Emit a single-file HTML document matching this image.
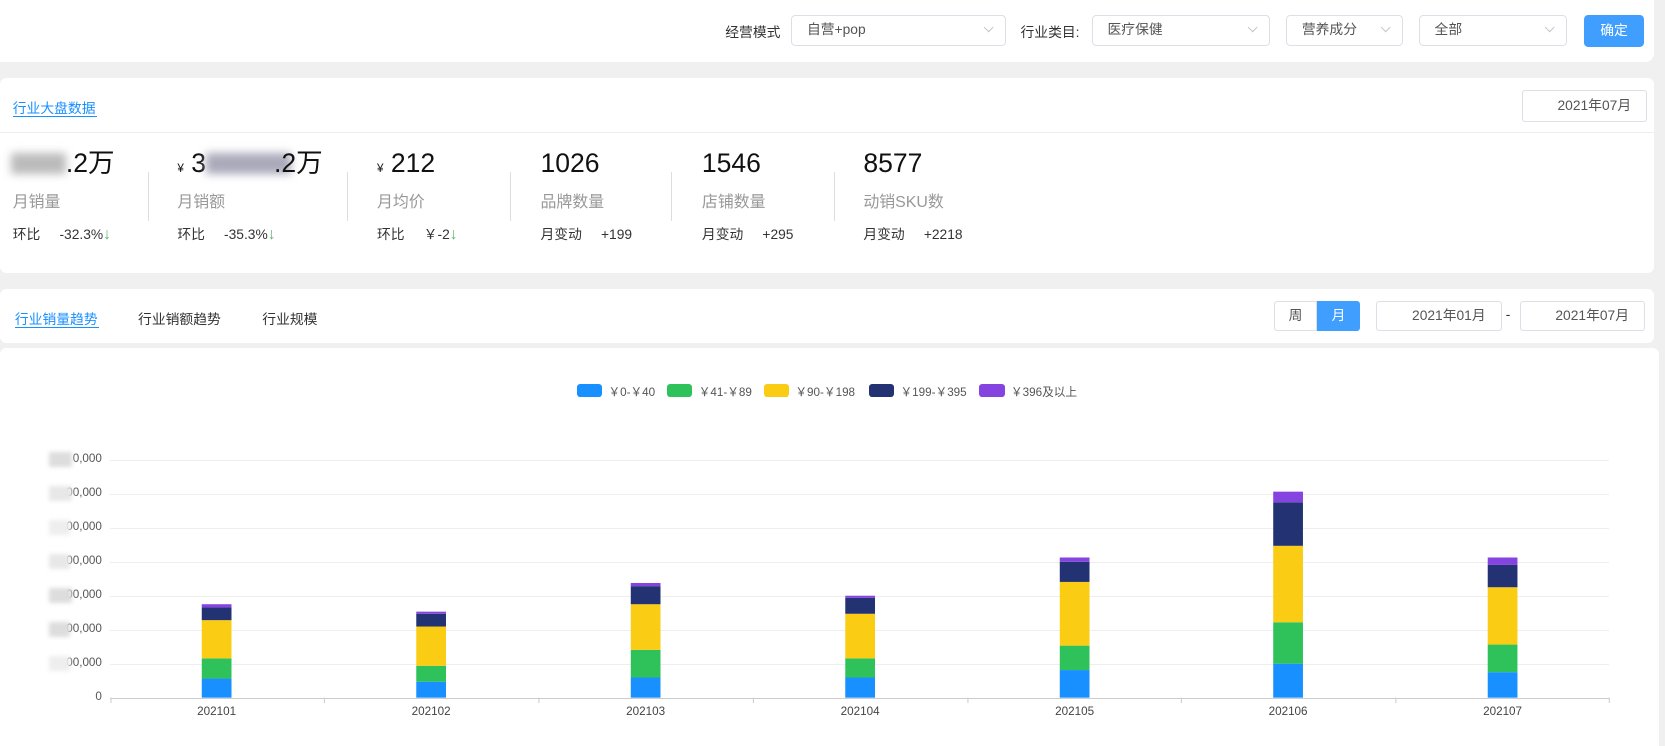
<!DOCTYPE html>
<html><head><meta charset="utf-8"><style>
html,body{margin:0;padding:0;background:#f0f0f0;overflow:hidden;width:1665px;height:746px}
#w{zoom:1.0619;position:relative;width:1568px;height:703px;font-family:"Liberation Sans","Noto Sans CJK SC",sans-serif;color:#333}
.a{position:absolute}
.card{position:absolute;background:#fff;border-radius:6px}
.sel{position:absolute;border:1px solid #dcdfe6;border-radius:4px;background:#fff;height:29px;box-sizing:border-box;font-size:13px;color:#555;line-height:27px;padding-left:14px}
.sel:after{content:"";position:absolute;right:12px;top:8px;width:6px;height:6px;border-right:1px solid #c0c4cc;border-bottom:1px solid #c0c4cc;transform:rotate(45deg)}
.box{position:absolute;border:1px solid #dcdfe6;border-radius:3px;box-sizing:border-box;font-size:13px;color:#555;text-align:right;padding-right:14px}
.big{position:absolute;font-size:25px;color:#111;top:139px;line-height:30px;white-space:nowrap}
.lbl{position:absolute;font-size:15px;color:#999;top:178px}
.sub{position:absolute;font-size:13px;color:#333;top:210px}
.sub b{font-weight:normal;margin-left:18px}
.dn{color:#5ab56e;font-size:15px}
.vd{position:absolute;top:162px;width:1px;height:46px;background:#ddd}
.grid{position:absolute;left:104px;width:1411px;height:1px;background:#eee}
.yl{position:absolute;left:40px;width:56px;text-align:right;font-size:11px;color:#555}
.blur{position:absolute;background:#ddd;filter:blur(2px)}
.leg{position:absolute;top:362px;width:24px;height:12px;border-radius:3px}
.lt{position:absolute;top:361px;font-size:11px;color:#555}
.xl{position:absolute;top:664px;font-size:11px;color:#444;width:60px;text-align:center}
.bl{position:absolute;filter:blur(4px);height:20px}
</style></head><body><div id="w">
<div class="card" style="left:0;top:0;width:1558px;height:58px;border-radius:0 0 8px 0"></div>
<div class="a" style="left:683px;top:20px;font-size:13px;color:#333">经营模式</div>
<div class="sel" style="left:745px;top:14px;width:202px">自营+pop</div>
<div class="a" style="left:961px;top:20px;font-size:13px;color:#333">行业类目:</div>
<div class="sel" style="left:1028px;top:14px;width:168px">医疗保健</div>
<div class="sel" style="left:1211px;top:14px;width:110px">营养成分</div>
<div class="sel" style="left:1336px;top:14px;width:140px">全部</div>
<div class="a" style="left:1492px;top:14px;width:56px;height:30px;background:#409eff;border-radius:4px;color:#fff;font-size:13px;text-align:center;line-height:30px">确定</div>

<div class="card" style="left:0;top:73px;width:1558px;height:184px"></div>
<div class="a" style="left:12px;top:91px;font-size:13px;color:#1890ff">行业大盘数据</div>
<div class="a" style="left:12px;top:109px;width:79px;height:1px;background:#1890ff"></div>
<div class="box" style="left:1433px;top:85px;width:118px;height:30px;line-height:28px">2021年07月</div>
<div class="a" style="left:0;top:124px;width:1558px;height:1px;background:#eee"></div>

<div class="bl" style="left:10px;top:144px;width:52px;background:#bbb"></div>
<div class="big" style="left:62px">.2万</div>
<div class="lbl" style="left:12px">月销量</div>
<div class="sub" style="left:12px">环比<b>-32.3%<span class="dn">↓</span></b></div>
<div class="vd" style="left:139px"></div>
<div class="big" style="left:167px"><span style="font-size:11px">¥</span> 3</div>
<div class="bl" style="left:194px;top:144px;width:80px;background:#aab"></div>
<div class="big" style="left:258px">.2万</div>
<div class="lbl" style="left:167px">月销额</div>
<div class="sub" style="left:167px">环比<b>-35.3%<span class="dn">↓</span></b></div>
<div class="vd" style="left:327px"></div>
<div class="big" style="left:355px"><span style="font-size:11px">¥</span> 212</div>
<div class="lbl" style="left:355px">月均价</div>
<div class="sub" style="left:355px">环比<b>￥-2<span class="dn">↓</span></b></div>
<div class="vd" style="left:480px"></div>
<div class="big" style="left:509px">1026</div>
<div class="lbl" style="left:509px">品牌数量</div>
<div class="sub" style="left:509px">月变动<b>+199</b></div>
<div class="vd" style="left:632px"></div>
<div class="big" style="left:661px">1546</div>
<div class="lbl" style="left:661px">店铺数量</div>
<div class="sub" style="left:661px">月变动<b>+295</b></div>
<div class="vd" style="left:785px"></div>
<div class="big" style="left:813px">8577</div>
<div class="lbl" style="left:813px">动销SKU数</div>
<div class="sub" style="left:813px">月变动<b>+2218</b></div>

<div class="card" style="left:0;top:272px;width:1558px;height:51px"></div>
<div class="a" style="left:14px;top:290px;font-size:13px;color:#1890ff">行业销量趋势</div>
<div class="a" style="left:14px;top:308px;width:79px;height:1px;background:#1890ff"></div>
<div class="a" style="left:130px;top:290px;font-size:13px;color:#333">行业销额趋势</div>
<div class="a" style="left:247px;top:290px;font-size:13px;color:#333">行业规模</div>
<div class="a" style="left:1200px;top:283px;width:40px;height:29px;border:1px solid #dcdfe6;border-radius:3px 0 0 3px;box-sizing:border-box;font-size:13px;text-align:center;line-height:27px;color:#555">周</div>
<div class="a" style="left:1240px;top:283px;width:41px;height:29px;background:#409eff;border-radius:0 3px 3px 0;font-size:13px;text-align:center;line-height:29px;color:#fff">月</div>
<div class="box" style="left:1296px;top:283px;width:118px;height:29px;line-height:27px">2021年01月</div>
<div class="a" style="left:1418px;top:289px;font-size:13px">-</div>
<div class="box" style="left:1431px;top:283px;width:118px;height:29px;line-height:27px">2021年07月</div>

<div class="card" style="left:0;top:328px;width:1562px;height:390px"></div>
<div class="leg" style="left:543px;background:#1890ff"></div><div class="lt" style="left:573px">￥0-￥40</div>
<div class="leg" style="left:628px;background:#2fc25b"></div><div class="lt" style="left:658px">￥41-￥89</div>
<div class="leg" style="left:719px;background:#facc14"></div><div class="lt" style="left:749px">￥90-￥198</div>
<div class="leg" style="left:818px;background:#223273"></div><div class="lt" style="left:848px">￥199-￥395</div>
<div class="leg" style="left:922px;background:#8543e0"></div><div class="lt" style="left:952px">￥396及以上</div>

<div class="grid" style="top:433px"></div><div class="grid" style="top:465px"></div><div class="grid" style="top:497px"></div><div class="grid" style="top:529px"></div><div class="grid" style="top:561px"></div><div class="grid" style="top:593px"></div><div class="grid" style="top:625px"></div>
<div class="grid" style="top:657px;background:#ccc"></div>
<div class="yl" style="top:426px">0,000</div><div class="yl" style="top:458px">00,000</div><div class="yl" style="top:490px">00,000</div><div class="yl" style="top:522px">00,000</div><div class="yl" style="top:554px">00,000</div><div class="yl" style="top:586px">00,000</div><div class="yl" style="top:618px">00,000</div><div class="yl" style="top:650px">0</div>
<div class="blur" style="left:46px;top:426px;width:22px;height:14px"></div><div class="blur" style="left:46px;top:458px;width:22px;height:14px;background:#e8e8e8"></div><div class="blur" style="left:46px;top:490px;width:20px;height:14px;background:#eee"></div><div class="blur" style="left:46px;top:522px;width:20px;height:14px;background:#e8e8e8"></div><div class="blur" style="left:46px;top:554px;width:22px;height:14px"></div><div class="blur" style="left:46px;top:586px;width:20px;height:14px"></div><div class="blur" style="left:46px;top:618px;width:20px;height:14px;background:#eee"></div>

<svg class="a" style="left:0;top:0" width="1568" height="703">
<g stroke="#ccc"><line x1="104.5" y1="657" x2="104.5" y2="662"/><line x1="305.5" y1="657" x2="305.5" y2="662"/><line x1="507.5" y1="657" x2="507.5" y2="662"/><line x1="709.5" y1="657" x2="709.5" y2="662"/><line x1="911.5" y1="657" x2="911.5" y2="662"/><line x1="1112.5" y1="657" x2="1112.5" y2="662"/><line x1="1314.5" y1="657" x2="1314.5" y2="662"/><line x1="1515.5" y1="657" x2="1515.5" y2="662"/></g>
<g><rect x="190" y="639" width="28" height="18" fill="#1890ff"/><rect x="190" y="620" width="28" height="19" fill="#2fc25b"/><rect x="190" y="584" width="28" height="36" fill="#facc14"/><rect x="190" y="572" width="28" height="12" fill="#223273"/><rect x="190" y="569" width="28" height="3" fill="#8543e0"/></g>
<g><rect x="392" y="642" width="28" height="15" fill="#1890ff"/><rect x="392" y="627" width="28" height="15" fill="#2fc25b"/><rect x="392" y="590" width="28" height="37" fill="#facc14"/><rect x="392" y="578" width="28" height="12" fill="#223273"/><rect x="392" y="576" width="28" height="2" fill="#8543e0"/></g>
<g><rect x="594" y="638" width="28" height="19" fill="#1890ff"/><rect x="594" y="612" width="28" height="26" fill="#2fc25b"/><rect x="594" y="569" width="28" height="43" fill="#facc14"/><rect x="594" y="552" width="28" height="17" fill="#223273"/><rect x="594" y="549" width="28" height="3" fill="#8543e0"/></g>
<g><rect x="796" y="638" width="28" height="19" fill="#1890ff"/><rect x="796" y="620" width="28" height="18" fill="#2fc25b"/><rect x="796" y="578" width="28" height="42" fill="#facc14"/><rect x="796" y="563" width="28" height="15" fill="#223273"/><rect x="796" y="561" width="28" height="2" fill="#8543e0"/></g>
<g><rect x="998" y="631" width="28" height="26" fill="#1890ff"/><rect x="998" y="608" width="28" height="23" fill="#2fc25b"/><rect x="998" y="548" width="28" height="60" fill="#facc14"/><rect x="998" y="529" width="28" height="19" fill="#223273"/><rect x="998" y="525" width="28" height="4" fill="#8543e0"/></g>
<g><rect x="1199" y="625" width="28" height="32" fill="#1890ff"/><rect x="1199" y="586" width="28" height="39" fill="#2fc25b"/><rect x="1199" y="514" width="28" height="72" fill="#facc14"/><rect x="1199" y="473" width="28" height="41" fill="#223273"/><rect x="1199" y="463" width="28" height="10" fill="#8543e0"/></g>
<g><rect x="1401" y="633" width="28" height="24" fill="#1890ff"/><rect x="1401" y="607" width="28" height="26" fill="#2fc25b"/><rect x="1401" y="553" width="28" height="54" fill="#facc14"/><rect x="1401" y="532" width="28" height="21" fill="#223273"/><rect x="1401" y="525" width="28" height="7" fill="#8543e0"/></g>
</svg>
<div class="xl" style="left:174px">202101</div><div class="xl" style="left:376px">202102</div><div class="xl" style="left:578px">202103</div><div class="xl" style="left:780px">202104</div><div class="xl" style="left:982px">202105</div><div class="xl" style="left:1183px">202106</div><div class="xl" style="left:1385px">202107</div>
</div></body></html>
